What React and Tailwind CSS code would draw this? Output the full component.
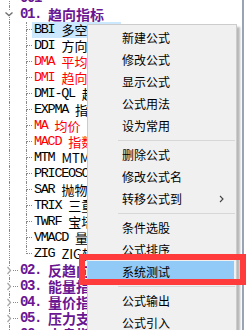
import React from 'react';

const mono = { fontFamily: '"Liberation Mono", "Noto Sans CJK SC", monospace' };
const cjk = { fontFamily: '"Noto Sans CJK SC", "Noto Sans", sans-serif' };

const children = [
  { code: 'BBI', name: '多空指标', selected: true },
  { code: 'DDI', name: '方向标准离差指数' },
  { code: 'DMA', name: '平均差', red: true },
  { code: 'DMI', name: '趋向指标', red: true },
  { code: 'DMI-QL', name: '趋向指标(前复权)' },
  { code: 'EXPMA', name: '指数平均线' },
  { code: 'MA', name: '均价', red: true },
  { code: 'MACD', name: '指数平滑异同平均线', red: true },
  { code: 'MTM', name: 'MTM动力指标' },
  { code: 'PRICEOSC', name: '价格振荡' },
  { code: 'SAR', name: '抛物线指标' },
  { code: 'TRIX', name: '三重指数平均线' },
  { code: 'TWRF', name: '宝塔线' },
  { code: 'VMACD', name: '量MACD' },
  { code: 'ZIG', name: 'ZIG转向' },
];

const groups = [
  { code: '02.', name: '反趋向指标' },
  { code: '03.', name: '能量指标' },
  { code: '04.', name: '量价指标' },
  { code: '05.', name: '压力支撑指标' },
  { code: '06.', name: '大盘指标' },
];

const menu = [
  '新建公式', '修改公式', '显示公式', '公式用法', '设为常用', '-',
  '删除公式', '修改公式名', '转移公式到>', '-',
  '条件选股', '公式排序', '系统测试*', '-',
  '公式输出', '公式引入',
];

function Gutter({ chevron }) {
  return (
    <div className="relative h-4 w-5 shrink-0">
      <div className="ml-[9px] h-full border-l border-dotted border-[#8a8a8a]" />
      {chevron === 'open' && (
        <svg className="absolute left-[4px] top-[5px] bg-white" width="10" height="6" viewBox="0 0 10 6">
          <path d="M1.5 1.5 L5 4.5 L8.5 1.5" fill="none" stroke="#6f6f6f" strokeWidth="1.4" />
        </svg>
      )}
      {chevron === 'closed' && (
        <>
          <div className="absolute left-[13px] top-[8px] w-[5px] border-t border-dotted border-[#8a8a8a]" />
          <svg className="absolute left-[6px] top-[4px] bg-white" width="6" height="9" viewBox="0 0 6 9">
            <path d="M1.5 1 L4.5 4.5 L1.5 8" fill="none" stroke="#a8a8a8" strokeWidth="1.3" />
          </svg>
        </>
      )}
    </div>
  );
}

function GroupRow({ code, name, open }) {
  return (
    <div className="flex h-4 items-center">
      <Gutter chevron={open ? 'open' : 'closed'} />
      <span className="text-[14px] font-bold tracking-[-1.4px] text-[#6a1591]" style={mono}>
        {code}
      </span>
      <span className="ml-[7px] whitespace-nowrap text-[14px] font-bold leading-4 text-[#6a1591]" style={cjk}>
        {name}
      </span>
    </div>
  );
}

function ChildRow({ code, name, red, selected, last }) {
  const color = red ? 'text-[#ff0000]' : 'text-black';
  return (
    <div className="flex h-4 items-stretch">
      <Gutter />
      <div className="ml-[6px] flex w-[6px] shrink-0 flex-col">
        <div className="h-[8px] border-b border-l border-dotted border-[#8a8a8a]" />
        <div className={`flex-1 ${last ? '' : 'border-l border-dotted border-[#8a8a8a]'}`} />
      </div>
      <div className={`flex items-center whitespace-nowrap pl-[2px] pr-2 ${selected ? 'bg-[#cce8ff]' : ''}`}>
        <span className={`text-[13.5px] tracking-[-1.3px] ${color}`} style={mono}>
          {code}
        </span>
        <span className={`ml-[7px] text-[13px] leading-4 ${color}`} style={cjk}>
          {name}
        </span>
      </div>
    </div>
  );
}

function ContextMenu() {
  return (
    <div className="absolute left-[87px] top-[24px] w-[150px] border border-[#cccccc] bg-[#f0f0f0] pt-[2px] shadow-[3px_3px_2px_rgba(0,0,0,0.28)]" style={cjk}>
      {menu.map((item, i) => {
        if (item === '-') {
          return (
            <div key={i} className="flex h-[7px] items-center pl-[30px] pr-[1px]">
              <div className="h-px w-full bg-[#d7d7d7]" />
            </div>
          );
        }
        const sub = item.endsWith('>');
        const active = item.endsWith('*');
        const label = item.replace(/[>*]$/, '');
        return (
          <div
            key={i}
            className={`mr-[2px] flex h-[22px] items-center pl-[34px] text-[12px] text-black ${active ? 'bg-[#91c9f7]' : ''}`}
          >
            <span className="flex-1">{label}</span>
            {sub && (
              <svg className="mr-[10px]" width="5" height="8" viewBox="0 0 5 8">
                <path d="M1 1 L4 4 L1 7" fill="none" stroke="#444" strokeWidth="1.1" />
              </svg>
            )}
          </div>
        );
      })}
    </div>
  );
}

export default function App() {
  return (
    <div className="relative flex h-[330px] w-[246px] overflow-hidden bg-white">
      <div className="mt-[-10px] flex-1 overflow-hidden">
        <div className="flex h-4 items-center">
          <Gutter />
          <span className="text-[14px] font-bold tracking-[-1.4px] text-[#6a1591]" style={mono}>001</span>
        </div>
        <GroupRow code="01." name="趋向指标" open />
        {children.map((c, i) => (
          <ChildRow key={c.code} {...c} last={i === children.length - 1} />
        ))}
        {groups.map((g) => (
          <GroupRow key={g.code} code={g.code} name={g.name} />
        ))}
      </div>
      <div className="w-[2px] shrink-0 bg-[#9aa3b5]" />
      <div className="w-[2px] shrink-0 bg-white" />

      <ContextMenu />

      <div className="pointer-events-none absolute left-[79px] top-[254px] h-[31px] w-[167px] border-[6px] border-[#ff3b3b]" />
    </div>
  );
}
